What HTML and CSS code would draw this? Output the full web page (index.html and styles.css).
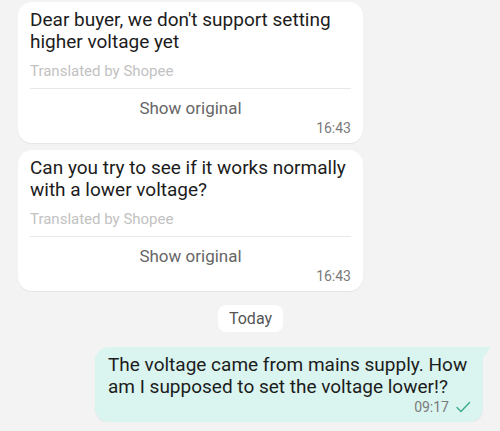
FILE: index.html
```html
<!DOCTYPE html>
<html lang="en">
<head>
    <meta charset="UTF-8">
    <meta name="viewport" content="width=device-width, initial-scale=1.0">
    <title>Chat</title>
    <link rel="stylesheet" href="styles.css">
</head>
<body>
    <div class="chat">
        <!-- Seller messages -->
        <div class="bubble">
            <p class="message">Dear buyer, we don't support setting higher voltage yet</p>
            <p class="translated">Translated by Shopee</p>
            <div class="show-original">Show original</div>
            <div class="time">16:43</div>
        </div>

        <div class="bubble">
            <p class="message">Can you try to see if it works normally with a lower voltage?</p>
            <p class="translated">Translated by Shopee</p>
            <div class="show-original">Show original</div>
            <div class="time">16:43</div>
        </div>

        <div class="day-label">Today</div>

        <!-- Buyer message -->
        <div class="bubble mine">
            <p class="message">The voltage came from mains supply. How am I supposed to set the voltage lower!?</p>
            <div class="time">
                09:17
                <svg class="tick" width="16" height="12" viewBox="0 0 16 12">
                    <path d="M2 6.5l4 4L14.5 1.5" fill="none" stroke="currentColor" stroke-width="1.4" stroke-linecap="round" stroke-linejoin="round"/>
                </svg>
            </div>
        </div>
    </div>
</body>
</html>
```

FILE: styles.css
```css
body {
    margin: 0;
    background-color: #f3f3f3;
    font-family: Roboto, "Noto Sans", sans-serif;
    color: #1c1c1c;
}

.chat {
    display: flex;
    flex-direction: column;
    align-items: flex-start;
    gap: 7px;
    padding: 2px 17px 0 18px;
}

.bubble {
    position: relative;
    box-sizing: border-box;
    max-width: 345px;
    padding: 7px 12px 6px;
    background-color: #fff;
    border-radius: 14px;
    box-shadow: 0 1px 1px rgba(0, 0, 0, 0.06);
}

.message {
    margin: 0;
    font-size: 19px;
    line-height: 22px;
}

.translated {
    margin: 9px 0 0;
    padding-bottom: 8px;
    border-bottom: 1px solid #e8e8e8;
    font-size: 15px;
    line-height: 18px;
    color: #c2c2c2;
}

.show-original {
    margin-top: 8px;
    text-align: center;
    font-size: 17px;
    line-height: 22px;
    color: #666;
}

.time {
    display: flex;
    justify-content: flex-end;
    align-items: center;
    gap: 6px;
    font-size: 14px;
    line-height: 18px;
    color: #7a7a7a;
}

.day-label {
    align-self: center;
    margin: 7px 0 8px;
    padding: 4px 11px;
    background-color: #fff;
    border-radius: 8px;
    font-size: 16px;
    line-height: 19px;
    color: #555;
}

/* Buyer's own message */
.bubble.mine {
    align-self: flex-end;
    max-width: 388px;
    padding: 7px 12px 6px 13px;
    background-color: #daf4ef;
    border-top-right-radius: 0;
}

.bubble.mine::after {
    content: "";
    position: absolute;
    top: 0;
    right: -8px;
    width: 8px;
    height: 11px;
    background-color: #daf4ef;
    clip-path: polygon(0 0, 100% 0, 0 100%);
}

.tick {
    color: #3ea98c;
}
```
